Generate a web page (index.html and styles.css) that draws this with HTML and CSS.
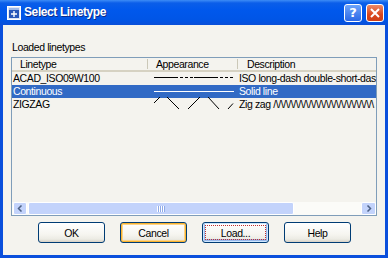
FILE: index.html
```html
<!DOCTYPE html>
<html>
<head>
<meta charset="utf-8">
<title>Select Linetype</title>
<link rel="stylesheet" href="styles.css">
</head>
<body>
<div class="window">
  <div class="titlebar">
    <svg class="app-icon" width="14" height="14" viewBox="0 0 14 14">
      <rect x="0.5" y="0.5" width="13" height="13" fill="#dfe7f5" stroke="#ffffff"/>
      <rect x="2" y="2" width="10" height="10" fill="#2a58b8"/>
      <rect x="2" y="2" width="10" height="2" fill="#9db8e8"/>
      <path d="M7 5 V11 M4 8 H10" stroke="#ffffff" stroke-width="1.4"/>
    </svg>
    <span class="title">Select Linetype</span>
    <div class="caption-btns">
      <span class="cap-btn cap-help">?</span>
      <span class="cap-btn cap-close">
        <svg width="12" height="12" viewBox="0 0 12 12"><path d="M2 2 L10 10 M10 2 L2 10" stroke="#ffffff" stroke-width="2"/></svg>
      </span>
    </div>
  </div>
  <div class="client">
    <div class="group-label">Loaded linetypes</div>
    <div class="listbox">
      <div class="lv-header">
        <div class="hcell h1">Linetype</div>
        <div class="hsep"></div>
        <div class="hcell h2">Appearance</div>
        <div class="hsep"></div>
        <div class="hcell h3">Description</div>
      </div>
      <div class="lv-row">
        <div class="cell c1">ACAD_ISO09W100</div>
        <div class="cell c2">
          <svg class="pattern" width="90" height="13" viewBox="0 0 90 13">
            <line x1="6" y1="5.5" x2="86" y2="5.5" stroke="#000" stroke-width="1" stroke-dasharray="24 2 3 2 3 2 3 1"/>
          </svg>
        </div>
        <div class="cell c3">ISO long-dash double-short-dash</div>
      </div>
      <div class="lv-row sel">
        <div class="cell c1">Continuous</div>
        <div class="cell c2">
          <svg class="pattern" width="90" height="13" viewBox="0 0 90 13">
            <line x1="6" y1="6.5" x2="86" y2="6.5" stroke="#ffffff" stroke-width="1"/>
          </svg>
        </div>
        <div class="cell c3">Solid line</div>
      </div>
      <div class="lv-row">
        <div class="cell c1">ZIGZAG</div>
        <div class="cell c2">
          <svg class="pattern" width="90" height="13" viewBox="0 0 90 13">
            <path d="M6 5 L12 -1 M19 -1 L31 11 M40 11 L52 -1 M60 -1 L71 11 M80 11 L85 5.5" stroke="#000" stroke-width="1" fill="none"/>
          </svg>
        </div>
        <div class="cell c3">Zig zag /\/\/\/\/\/\/\/\/\/\/\/\/\/\/\/\/\/\/\/\</div>
      </div>
      <div class="lv-spacer"></div>
      <div class="hscroll">
        <div class="sb-btn sb-left">
          <svg width="6" height="7" viewBox="0 0 6 7"><path d="M4.5 0.5 L1.5 3.5 L4.5 6.5" stroke="#4d6185" stroke-width="1.5" fill="none"/></svg>
        </div>
        <div class="sb-thumb"><span class="grip"></span></div>
        <div class="sb-track"></div>
        <div class="sb-btn sb-right">
          <svg width="6" height="7" viewBox="0 0 6 7"><path d="M1.5 0.5 L4.5 3.5 L1.5 6.5" stroke="#4d6185" stroke-width="1.5" fill="none"/></svg>
        </div>
      </div>
    </div>
    <div class="buttons">
      <button class="btn">OK</button>
      <button class="btn btn-default">Cancel</button>
      <button class="btn btn-focus"><span class="focus-rect">Load...</span></button>
      <button class="btn">Help</button>
    </div>
  </div>
</div>
</body>
</html>
```

FILE: styles.css
```css
html, body {
  margin: 0;
  padding: 0;
}

body {
  width: 388px;
  height: 258px;
  overflow: hidden;
  font-family: "Liberation Sans", Arial, sans-serif;
  font-size: 10.5px;
  letter-spacing: -0.4px;
  color: #000;
}

.window {
  width: 388px;
  height: 258px;
  display: flex;
  flex-direction: column;
  background: #0a4fdc;
}

.titlebar {
  height: 25px;
  flex: none;
  display: flex;
  align-items: center;
  padding: 0 4px 0 7px;
  background: linear-gradient(to bottom, #3d8cf6 0px, #0b5ee9 3px, #0058ec 10px, #0055e6 20px, #0a4fd8 25px);
}

.app-icon {
  flex: none;
  display: block;
}

.title {
  flex: 1;
  margin-left: 3px;
  color: #ffffff;
  font-weight: bold;
  font-size: 12px;
  letter-spacing: -0.4px;
  line-height: 25px;
  text-shadow: 1px 1px 0 #0b2b8a;
}

.caption-btns {
  display: flex;
  gap: 4px;
  align-items: center;
}

.cap-btn {
  width: 16px;
  height: 16px;
  border: 1px solid #ffffff;
  border-radius: 3px;
  display: flex;
  align-items: center;
  justify-content: center;
}

.cap-help {
  background: linear-gradient(to bottom, #6ea4fa, #2b68e6);
  color: #ffffff;
  font-weight: bold;
  font-size: 13px;
  font-family: "DejaVu Sans", sans-serif;
  letter-spacing: 0;
}

.cap-close {
  background: linear-gradient(to bottom, #ec8a68, #d9461d 60%, #cf3f16);
}

.cap-close svg {
  display: block;
}

.client {
  flex: 1;
  margin: 0 3px 3px 3px;
  background: #f4f3ee;
  display: flex;
  flex-direction: column;
  padding: 16px 0 0 8px;
}

.group-label {
  height: 13px;
  line-height: 13px;
  padding-left: 1px;
}

.listbox {
  margin-top: 3px;
  width: 366px;
  height: 159px;
  box-sizing: border-box;
  border: 1px solid #7f9db9;
  display: flex;
  flex-direction: column;
  overflow: hidden;
}

.lv-header {
  flex: none;
  height: 12px;
  border-bottom: 2px solid #d6d2c2;
  display: flex;
  align-items: center;
  line-height: 12px;
}

.hcell {
  box-sizing: border-box;
  white-space: nowrap;
  overflow: hidden;
}

.h1 { width: 135px; padding-left: 8px; }
.h2 { width: 89px; padding-left: 8px; }
.h3 { flex: 1; padding-left: 9px; }

.hsep {
  width: 1px;
  height: 10px;
  background: #cbc8b8;
  flex: none;
}

.lv-row {
  flex: none;
  height: 13px;
  line-height: 13px;
  display: flex;
  align-items: stretch;
}

.lv-row.sel {
  background: #316ac5;
  color: #ffffff;
}

.cell {
  box-sizing: border-box;
  white-space: nowrap;
  overflow: hidden;
}

.c1 { width: 136px; padding-left: 1px; }
.c2 { width: 90px; overflow: visible; }
.c3 { flex: 1; padding-left: 1px; }

.pattern {
  display: block;
  overflow: visible;
}

.lv-spacer {
  flex: 1;
}

.hscroll {
  flex: none;
  height: 13px;
  display: flex;
  background: #fbfbf8;
}

.sb-btn {
  flex: none;
  box-sizing: border-box;
  height: 13px;
  border: 1px solid #ffffff;
  border-radius: 2px;
  background: #c3d3fb;
  display: flex;
  align-items: center;
  justify-content: center;
}

.sb-btn svg {
  display: block;
}

.sb-left {
  width: 14px;
  margin-left: 1px;
}

.sb-right {
  width: 15px;
}

.sb-thumb {
  flex: none;
  width: 266px;
  margin-left: 1px;
  box-sizing: border-box;
  height: 13px;
  border: 1px solid #ffffff;
  border-radius: 2px;
  background: #c3d3fb;
  display: flex;
  align-items: center;
  justify-content: center;
}

.grip {
  display: block;
  width: 8px;
  height: 6px;
  background: repeating-linear-gradient(to right, #ffffff 0, #ffffff 1px, #8faae8 1px, #8faae8 2px);
}

.sb-track {
  flex: 1;
}

.buttons {
  display: flex;
  gap: 15px;
  margin-top: 6px;
  padding-left: 27px;
}

.btn {
  width: 67px;
  height: 21px;
  box-sizing: border-box;
  border: 1px solid #003c74;
  border-radius: 3px;
  background: linear-gradient(to bottom, #ffffff 0, #f6f5f0 60%, #ecebe4 85%, #d6d0c5 100%);
  font-family: "Liberation Sans", Arial, sans-serif;
  font-size: 10.5px;
  letter-spacing: -0.4px;
  color: #000;
  padding: 0;
  display: flex;
  align-items: center;
  justify-content: center;
}

.btn-default {
  box-shadow: inset 0 0 0 1px #f8b330, inset 0 0 0 2px #fcd48a;
}

.btn-focus {
  box-shadow: inset 0 0 0 1px #cee7ff, inset 0 -1px 0 2px #98b8ea;
}

.focus-rect {
  display: flex;
  align-items: center;
  justify-content: center;
  width: 61px;
  height: 15px;
  box-sizing: border-box;
  border: 1px dotted #c03030;
}
```
